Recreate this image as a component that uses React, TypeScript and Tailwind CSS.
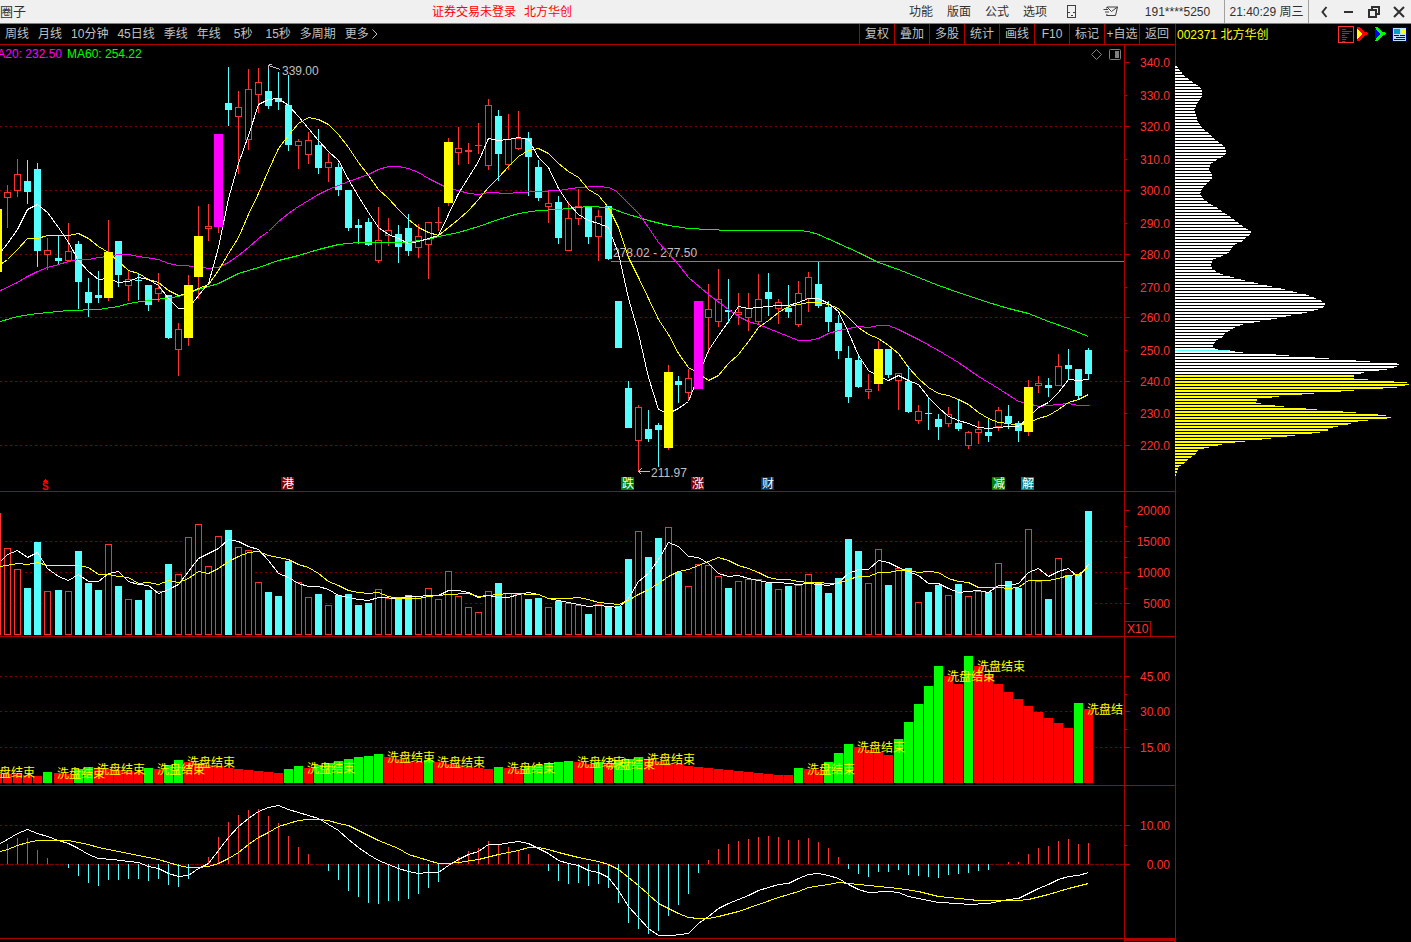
import { ReactNode } from "react"

type Kind = "r" | "c" | "y" | "m"
// kind, high, body top, body bottom, low, volume top
type Candle = [Kind, number, number, number, number, number]

const candles: Candle[] = [
    ["y", 209, 209, 272, 272, 513], ["r", 185, 192, 198, 228, 548], ["r", 159, 174, 191, 197, 569],
    ["c", 160, 181, 192, 204, 588], ["c", 163, 169, 251, 267, 542], ["r", 238, 250, 255, 270, 591],
    ["c", 235, 258, 261, 264, 590], ["r", 223, 251, 261, 261, 591], ["c", 241, 244, 282, 309, 551],
    ["c", 278, 292, 303, 317, 583], ["c", 271, 295, 298, 303, 590], ["y", 220, 252, 298, 301, 544],
    ["c", 241, 241, 275, 287, 586], ["r", 271, 279, 286, 301, 599], ["c", 273, 280, 281, 300, 600],
    ["c", 285, 285, 305, 311, 590], ["r", 273, 288, 294, 302, 591], ["c", 295, 295, 338, 339, 564],
    ["r", 323, 329, 350, 376, 574], ["y", 275, 285, 338, 346, 537], ["y", 206, 236, 277, 299, 524],
    ["r", 204, 226, 229, 241, 566], ["m", 134, 134, 227, 233, 536], ["c", 67, 103, 110, 126, 530],
    ["r", 91, 107, 117, 174, 547], ["r", 69, 89, 140, 150, 550], ["r", 68, 82, 95, 113, 582],
    ["c", 68, 91, 106, 109, 592], ["c", 72, 98, 102, 110, 596], ["c", 75, 105, 145, 151, 561],
    ["r", 139, 141, 146, 169, 582], ["r", 132, 140, 155, 164, 597], ["c", 129, 145, 168, 174, 594],
    ["r", 153, 162, 168, 182, 605], ["c", 163, 167, 190, 196, 595], ["c", 190, 190, 228, 231, 594],
    ["c", 219, 225, 228, 244, 605], ["c", 218, 222, 245, 246, 603], ["r", 207, 240, 261, 263, 589],
    ["r", 218, 230, 236, 246, 598], ["c", 225, 234, 247, 263, 597], ["c", 214, 228, 251, 256, 595],
    ["r", 224, 236, 248, 258, 596], ["r", 222, 222, 245, 279, 588], ["r", 207, 222, 223, 231, 599],
    ["y", 138, 142, 203, 206, 571], ["r", 127, 148, 153, 165, 596], ["r", 143, 150, 152, 164, 607],
    ["r", 123, 145, 146, 154, 612], ["r", 99, 105, 166, 170, 591], ["c", 110, 116, 154, 181, 583],
    ["r", 114, 139, 165, 170, 593], ["r", 111, 138, 149, 150, 594], ["c", 132, 138, 157, 196, 599],
    ["c", 160, 167, 198, 201, 598], ["r", 190, 203, 207, 223, 607], ["c", 196, 202, 238, 244, 601],
    ["r", 202, 218, 251, 251, 603], ["r", 189, 206, 219, 225, 605], ["c", 206, 206, 237, 244, 614],
    ["r", 210, 216, 237, 261, 604], ["c", 206, 206, 259, 260, 606], ["c", 301, 301, 348, 348, 606],
    ["c", 381, 388, 428, 428, 559], ["r", 405, 407, 441, 471, 531], ["c", 410, 429, 439, 442, 557],
    ["c", 423, 425, 430, 467, 538], ["y", 365, 372, 448, 450, 527], ["c", 376, 381, 385, 403, 572],
    ["r", 369, 378, 393, 400, 586], ["m", 301, 301, 389, 389, 564], ["r", 284, 309, 318, 353, 565],
    ["r", 269, 299, 322, 327, 576], ["c", 279, 310, 312, 323, 588], ["r", 293, 312, 315, 325, 581],
    ["r", 293, 308, 318, 331, 579], ["r", 274, 299, 322, 324, 579], ["c", 273, 292, 299, 316, 583],
    ["r", 299, 302, 309, 324, 589], ["c", 285, 308, 312, 318, 586], ["r", 281, 293, 325, 327, 585],
    ["r", 272, 277, 299, 312, 574], ["c", 262, 284, 306, 308, 583], ["c", 301, 307, 322, 332, 593],
    ["c", 315, 323, 351, 359, 578], ["c", 346, 358, 397, 403, 539], ["c", 356, 360, 387, 388, 551],
    ["r", 374, 389, 392, 399, 583], ["y", 341, 349, 384, 391, 549], ["c", 349, 349, 375, 378, 585],
    ["r", 373, 373, 381, 410, 568], ["c", 366, 381, 412, 413, 568], ["r", 405, 411, 421, 424, 602],
    ["c", 397, 413, 414, 430, 592], ["c", 414, 419, 427, 440, 585], ["r", 407, 414, 424, 427, 595],
    ["c", 400, 423, 429, 431, 584], ["r", 431, 432, 446, 449, 596], ["r", 421, 429, 433, 444, 591],
    ["c", 419, 432, 436, 442, 592], ["r", 407, 410, 427, 431, 563], ["c", 405, 416, 423, 429, 581],
    ["c", 421, 423, 431, 442, 588], ["y", 380, 387, 432, 436, 529], ["r", 376, 383, 386, 393, 581],
    ["c", 378, 385, 388, 397, 599], ["r", 354, 366, 386, 386, 558], ["c", 349, 365, 369, 379, 575],
    ["c", 369, 369, 396, 399, 574], ["c", 348, 350, 374, 380, 511],
]

const ma5 = "0,252 7,243 17,229 27,209 37,204 47,212 58,227 68,242 78,260 88,271 98,279 108,278 118,282 128,281 138,277 148,279 158,285 168,298 178,308 188,308 198,295 208,283 218,247 228,198 238,163 248,135 258,104 268,99 278,98 288,105 298,116 308,128 318,140 328,151 338,160 348,179 358,196 368,212 378,227 388,234 398,238 408,243 418,241 428,238 438,235 448,214 458,193 468,177 478,161 488,138 498,140 508,139 518,137 528,139 538,157 548,167 558,188 568,203 578,214 588,220 598,223 608,227 618,253 628,298 638,333 648,377 658,409 668,413 678,408 688,401 698,375 708,350 718,335 728,321 738,306 748,308 758,307 768,306 778,305 788,305 798,302 808,298 818,298 828,303 838,311 848,332 858,355 868,370 878,376 888,380 898,375 908,380 918,384 928,397 938,407 948,416 958,420 968,423 978,427 988,428 998,427 1008,426 1018,426 1028,417 1038,407 1048,402 1058,392 1068,379 1078,380 1088,379"
const ma10 = "0,264 7,259 17,249 27,238 37,238 47,235 68,235 78,233 88,238 98,246 108,252 118,261 128,270 138,273 148,279 158,282 168,290 178,295 188,293 198,288 208,284 218,270 228,253 238,237 248,214 258,193 268,170 278,148 288,135 298,123 308,117 318,119 328,124 338,134 348,147 358,162 368,175 378,189 388,198 398,209 408,219 418,227 428,232 438,235 448,227 458,219 468,210 478,199 488,187 498,177 508,166 518,156 528,150 538,148 548,153 558,163 568,171 578,177 588,189 598,195 608,207 618,227 628,257 638,277 648,298 658,319 668,334 678,353 688,367 698,373 708,380 718,375 728,363 738,354 748,341 758,327 768,320 778,312 788,306 798,304 808,302 818,302 828,304 838,308 848,317 858,327 868,334 878,338 888,345 898,353 908,367 918,378 928,387 938,393 948,395 958,399 968,404 978,412 988,418 998,422 1008,423 1018,425 1028,422 1038,418 1048,415 1058,409 1068,402 1078,399 1088,394"
const ma20 = "0,290 17,282 27,276 37,271 47,267 58,264 68,261 78,259 88,259 98,257 108,256 118,254 128,254 138,256 158,259 168,263 178,265 198,266 208,268 218,267 228,262 238,255 248,247 258,238 268,231 278,221 288,213 298,206 308,200 318,194 328,189 338,185 348,181 368,174 378,169 388,166 398,166 408,168 418,172 428,178 438,183 448,188 458,190 468,193 478,194 488,192 508,193 518,192 538,191 558,190 578,187 598,186 608,187 615,190 628,203 638,213 648,227 658,242 668,253 678,264 688,277 708,294 728,309 738,316 748,321 758,324 768,328 778,332 788,336 798,340 808,340 818,338 828,333 838,330 848,328 858,326 868,327 878,325 888,325 898,329 918,339 938,350 958,362 978,376 998,388 1018,401 1028,403 1038,406 1048,405 1068,403 1078,405 1088,405"
const ma60 = "0,321 17,316 37,313 68,310 98,309 118,306 128,303 148,300 178,296 198,289 208,286 218,283 238,273 258,267 278,260 298,255 318,249 338,244 358,242 408,242 418,240 428,239 438,236 458,232 478,226 498,219 518,213 538,210 558,209 588,206 608,207 628,214 648,220 668,225 688,228 728,230 798,230 808,231 818,234 838,243 858,252 878,262 898,269 918,277 938,285 958,292 988,302 1008,308 1028,313 1048,321 1068,328 1088,336"

const volMa5 = "0,561 7,554 17,550 27,557 37,552 47,568 58,576 68,580 78,574 88,581 98,581 108,573 118,571 128,581 138,584 148,585 158,593 168,589 178,584 188,571 198,558 208,553 218,548 228,539 238,541 248,546 258,549 268,560 278,573 288,577 298,583 308,586 318,586 328,589 338,595 348,597 358,599 368,600 378,597 398,598 408,596 438,595 448,590 458,590 468,592 478,597 488,595 498,597 508,597 518,594 528,592 538,594 548,598 558,600 568,602 578,604 588,606 598,605 608,606 618,607 628,598 638,581 648,573 658,559 668,542 678,546 688,556 698,557 708,563 718,573 728,576 738,575 748,578 768,582 778,582 798,584 808,583 828,585 838,582 848,573 858,569 868,569 878,560 888,562 898,567 908,571 918,575 928,583 938,583 948,588 958,592 968,591 978,590 988,592 998,585 1008,585 1018,583 1028,572 1038,568 1048,576 1058,571 1068,568 1078,577 1088,564"
const volMa10 = "0,566 17,563 27,564 37,562 47,565 78,565 88,567 98,574 108,574 118,576 128,577 138,583 148,582 158,584 168,580 178,582 188,578 198,571 208,573 218,568 228,561 238,556 248,552 258,551 268,555 278,557 288,559 298,564 308,567 318,573 328,581 338,585 348,590 358,592 368,593 378,592 388,596 398,598 418,598 428,596 448,594 468,593 478,596 488,595 508,593 538,594 548,598 568,598 578,597 588,599 598,602 618,604 628,600 638,594 648,589 658,583 668,576 678,571 688,569 698,565 708,561 718,557 728,560 738,565 748,568 758,572 768,577 778,579 788,579 798,581 808,582 838,583 848,579 858,576 868,576 878,572 888,572 898,570 908,570 918,572 928,571 938,572 948,578 958,581 968,582 978,587 998,587 1008,588 1018,587 1028,580 1048,580 1058,578 1068,575 1078,574 1088,567"

const dif = "0,843 7,839 17,833 27,829 37,833 47,836 58,840 68,843 78,848 88,854 98,858 112,859 128,861 138,862 148,866 158,868 168,873 178,876 188,875 198,868 208,863 218,850 228,837 238,826 248,818 258,811 268,807 278,805 288,809 308,815 318,818 328,824 338,830 348,839 358,847 368,854 378,860 388,864 398,868 408,871 418,873 428,872 438,872 448,865 458,859 468,854 478,851 488,844 498,844 518,841 528,843 538,848 548,853 558,860 568,863 578,865 588,870 598,872 608,877 618,890 628,906 638,917 648,928 658,935 672,935 688,933 698,923 708,916 718,908 728,903 738,899 748,895 758,890 768,887 778,884 788,883 798,878 808,874 818,873 828,875 838,878 848,884 858,889 868,892 888,891 898,892 908,896 918,898 928,900 938,902 958,903 968,904 988,903 998,901 1008,899 1018,898 1028,893 1038,888 1048,884 1058,879 1068,876 1078,875 1088,872"
const dea = "0,851 7,849 17,845 27,842 37,840 68,840 78,842 88,844 98,847 118,851 138,855 158,859 168,862 178,865 188,867 198,867 208,866 218,863 228,858 238,852 248,844 258,837 268,832 278,826 288,823 298,820 308,819 318,819 328,820 338,823 348,825 358,830 378,840 398,848 408,854 418,857 428,860 438,863 448,863 458,862 478,859 498,854 518,850 528,847 538,847 548,849 558,852 578,857 598,861 608,864 618,869 628,877 638,885 648,894 658,903 668,908 678,913 688,917 698,918 708,918 718,916 738,911 758,904 778,897 798,891 808,887 828,884 838,882 848,883 858,884 878,886 898,888 918,891 938,896 958,898 978,900 1018,900 1028,899 1048,894 1068,888 1088,883"

const washTops = [
    774, 774, 774, 775, 776, 772, 773, 774, 769, 767, 768, 769, 770, 771, 772, 768, 769, 765, 760, 762,
    763, 765, 766, 768, 769, 770, 771, 772, 773, 769, 766, 768, 765, 763, 761, 759, 757, 756, 754, 757,
    759, 761, 762, 760, 762, 764, 765, 767, 768, 769, 767, 768, 769, 766, 765, 763, 762, 761, 762, 764,
    762, 763, 761, 759, 757, 759, 761, 763, 764, 766, 767, 768, 769, 770, 771, 772, 773, 774, 775, 775,
    768, 769, 770, 762, 753, 744, 747, 750, 752, 755, 739, 722, 704, 686, 666, 676, 684, 656, 666, 675,
    684, 692, 699, 706, 712, 718, 723, 728, 703, 709,
]

const washLabels: [number, number][] = [
    [-13, 772], [57, 773], [97, 769], [157, 769], [187, 762], [307, 768], [387, 757], [437, 762], [507, 768],
    [577, 762], [607, 764], [647, 759], [807, 769], [857, 747], [947, 676], [977, 666], [1087, 709],
]

const macd = [
    864, 844, 838, 838, 850, 858, 864, 868, 876, 883, 886, 880, 880, 879, 879, 881, 879, 885, 887, 879,
    864, 857, 837, 822, 815, 810, 809, 816, 823, 836, 847, 854, 864, 871, 880, 891, 897, 903, 904, 901,
    901, 899, 894, 888, 882, 864, 857, 851, 848, 841, 845, 847, 850, 854, 864, 871, 881, 884, 883, 886,
    884, 888, 903, 923, 929, 934, 931, 916, 905, 894, 873, 860, 849, 844, 841, 839, 837, 836, 837, 840,
    840, 838, 842, 848, 857, 869, 874, 877, 872, 872, 870, 875, 876, 877, 878, 875, 874, 873, 871, 870,
    864, 862, 862, 854, 848, 846, 841, 839, 844, 843,
]

// y, width of the chip distribution
const chips: [number, number][] = [
    [65, 1], [69, 4], [75, 9], [82, 18], [85, 23], [88, 26], [91, 27], [95, 27], [98, 26], [103, 22], [109, 19],
    [115, 21], [122, 23], [128, 28], [133, 34], [140, 41], [144, 47], [147, 50], [153, 51], [156, 48], [159, 42],
    [163, 36], [169, 34], [175, 37], [178, 37], [181, 34], [186, 29], [190, 26], [194, 25], [198, 28], [203, 34],
    [207, 42], [211, 47], [217, 56], [222, 63], [228, 71], [231, 76], [235, 74], [238, 70], [241, 67], [244, 60],
    [248, 56], [252, 54], [256, 46], [259, 38], [263, 36], [268, 37], [272, 42], [275, 51], [279, 66], [282, 79],
    [285, 92], [288, 106], [291, 118], [294, 131], [297, 139], [300, 146], [303, 150], [307, 148], [309, 143],
    [312, 132], [315, 116], [318, 102], [321, 85], [324, 68], [327, 60], [332, 51], [337, 47], [340, 41],
    [347, 37], [349, 43], [352, 68], [354, 101], [357, 140], [360, 181], [363, 222], [365, 225], [369, 212],
    [372, 189], [375, 179], [378, 179], [379, 193], [382, 232], [384, 234], [387, 222], [390, 179], [393, 139],
    [396, 104], [399, 82], [402, 81], [404, 90], [407, 119], [410, 154], [413, 195], [416, 219], [418, 212],
    [421, 183], [425, 169], [428, 152], [431, 154], [434, 128], [437, 104], [440, 79], [443, 51], [446, 39],
    [449, 24], [454, 20], [459, 13], [463, 9], [466, 4], [470, 2], [476, 1],
]

const badges = [
    { x: 281, text: "港", fill: "#800000" },
    { x: 621, text: "跌", fill: "#008000" },
    { x: 691, text: "涨", fill: "#800000" },
    { x: 761, text: "财", fill: "#003366" },
    { x: 992, text: "减", fill: "#008000" },
    { x: 1021, text: "解", fill: "#008080" },
]

const periods = ["周线", "月线", "10分钟", "45日线", "季线", "年线", "5秒", "15秒", "多周期", "更多"]
const tools = ["复权", "叠加", "多股", "统计", "画线", "F10", "标记", "+自选", "返回"]
const menus = ["功能", "版面", "公式", "选项"]

const barX = (i: number) => (i < 6 ? i * 10 - 3 : i * 10 - 2)

// bars that rise above the previous one are green
const washFill = (i: number) => (i > 0 && washTops[i] < washTops[i - 1] ? "#00ff00" : "#ff0000")

function chipWidth(y: number){
    const next = chips.findIndex((c) => c[0] >= y)
    if(next <= 0) return chips[0][1]
    const [y0, w0] = chips[next - 1]
    const [y1, w1] = chips[next]
    return Math.round(w0 + ((w1 - w0) * (y - y0)) / (y1 - y0))
}

interface PanelProps{
    top: number
    height: string
    grid: number[]
    ticks: [number, string][]
    minor: number[]
    children: ReactNode
    axisExtra?: ReactNode
}

function Panel({ top, height, grid, ticks, minor, children, axisExtra }: PanelProps){
    return(
        <div className={`flex border-b border-[#b00000] ${height}`}>
            <svg className="h-full min-w-0 flex-1" shapeRendering="crispEdges">
                <g transform={`translate(0 ${-top})`}>
                    {grid.map((y) => (
                        <line key={y} x1="0" x2="100%" y1={y + 0.5} y2={y + 0.5} stroke="#800000" strokeDasharray="2 3" />
                    ))}
                    {children}
                </g>
            </svg>
            <svg className="h-full w-[51px] shrink-0 border-l border-[#b00000]" shapeRendering="crispEdges">
                <g transform={`translate(0 ${-top})`}>
                    {minor.map((y) => (
                        <rect key={y} x="0" y={y} width="2" height="1" fill="#b00000" />
                    ))}
                    {ticks.map(([y, label]) => (
                        <g key={y}>
                            {!minor.includes(y) && <rect x="0" y={y} width="5" height="1" fill="#b00000" />}
                            <text x="45" y={y + 5} textAnchor="end" fill="#ff3232">{label}</text>
                        </g>
                    ))}
                    {axisExtra}
                </g>
            </svg>
        </div>
    )
}

function Line({ points, color }: { points: string, color: string }){
    return <polyline points={points} transform="translate(0.5 0.5)" fill="none" stroke={color} />
}

function CandleBar({ candle, x }: { candle: Candle, x: number }){
    const [kind, high, top, bottom, low] = candle
    const color = kind === "c" ? "#54ffff" : "#ff3232"

    return(
        <g>
            <rect x={x} y={high} width="1" height={Math.max(low - high, 0)} fill={color} />
            {kind === "c" && <rect x={x - 3} y={top} width="7" height={bottom - top} fill={color} />}
            {kind === "r" && bottom - top < 3 && <rect x={x - 3} y={top} width="7" height={bottom - top} fill={color} />}
            {kind === "r" && bottom - top >= 3 && (
                <rect x={x - 2.5} y={top + 0.5} width="6" height={bottom - top - 1} fill="#000" stroke={color} />
            )}
        </g>
    )
}

function PricePanel(){
    const prices: [number, string][] = [
        [62, "340.0"], [95, "330.0"], [126, "320.0"], [159, "310.0"], [190, "300.0"], [223, "290.0"], [254, "280.0"],
        [287, "270.0"], [317, "260.0"], [350, "250.0"], [381, "240.0"], [413, "230.0"], [445, "220.0"],
    ]

    return(
        <Panel
            top={45}
            height="h-[447px]"
            grid={[126, 190, 254, 317, 381, 445]}
            ticks={prices}
            minor={[95, 159, 223, 287, 350, 413]}
        >
            <rect x="611" y="261" width="100%" height="1" fill="#808080" />
            {candles.map((c, i) => <CandleBar key={i} candle={c} x={barX(i)} />)}
            <text x="613" y="257" fill="#c0c0c0">278.02 - 277.50</text>
            <Line points={ma60} color="#00ff00" />
            <Line points={ma20} color="#ff00ff" />
            <Line points={ma10} color="#ffff00" />
            <Line points={ma5} color="#ffffff" />
            {candles.map(([kind, , top, bottom], i) => (kind === "y" || kind === "m") && (
                <rect
                    key={i}
                    x={barX(i) - 4}
                    y={top}
                    width="9"
                    height={bottom - top}
                    fill={kind === "y" ? "#ffff00" : "#ff00ff"}
                />
            ))}
            <text x="62" y="58" textAnchor="end" fill="#ff00ff">MA20: 232.50</text>
            <text x="67" y="58" fill="#00ff00">MA60: 254.22</text>
            <path d="M280.500 69.500L268.500 65.500M268.500 69V65.500M268.500 64.500H272" fill="none" stroke="#c0c0c0" />
            <text x="282" y="75" fill="#c0c0c0">339.00</text>
            <path d="M650 471.500H638.500M641.500 468.500L638.500 471.500L641.500 474.500" fill="none" stroke="#c0c0c0" />
            <text x="651" y="477" fill="#c0c0c0">211.97</text>
            <g fill="none" stroke="#808080" shapeRendering="auto">
                <path d="M1096.500 49.500L1101.500 54.500L1096.500 59.500L1091.500 54.500Z" />
                <rect x="1109.500" y="49.500" width="11" height="10" rx="1" />
                <rect x="1115" y="51" width="4" height="7" fill="#808080" stroke="none" />
            </g>
            <path d="M45.500 479L48 482H43Z" fill="#ff0000" />
            <text x="42" y="490" fill="#ff0000" fontSize="10" fontWeight="700">S</text>
            {badges.map((b) => (
                <g key={b.x}>
                    <rect x={b.x} y="477" width="13" height="13" fill={b.fill} />
                    <text x={b.x + 1} y="488" fill="#fff">{b.text}</text>
                </g>
            ))}
        </Panel>
    )
}

function VolumePanel(){
    return(
        <Panel
            top={492}
            height="h-[145px]"
            grid={[541, 572, 603]}
            ticks={[[510, "20000"], [541, "15000"], [572, "10000"], [603, "5000"]]}
            minor={[526, 557, 588]}
            axisExtra={
                <>
                    <path d="M0 621.500H25.500V636" fill="none" stroke="#b00000" />
                    <text x="2" y="633" fill="#ff3232">X10</text>
                </>
            }
        >
            {candles.map(([kind, , , , , top], i) => kind === "c" ? (
                <rect key={i} x={barX(i) - 3} y={top} width="7" height={635 - top} fill="#54ffff" />
            ) : (
                <rect
                    key={i}
                    x={barX(i) - 2.5}
                    y={top + 0.5}
                    width="6"
                    height={634 - top}
                    fill="#000"
                    stroke="#ff3232"
                />
            ))}
            <Line points={volMa5} color="#ffffff" />
            <Line points={volMa10} color="#ffff00" />
        </Panel>
    )
}

function WashPanel(){
    return(
        <Panel
            top={637}
            height="h-[149px]"
            grid={[676, 711, 747]}
            ticks={[[676, "45.00"], [711, "30.00"], [747, "15.00"]]}
            minor={[694, 729]}
        >
            {washTops.map((top, i) => (
                <rect key={i} x={barX(i) - 4} y={top} width="9" height={783 - top} fill={washFill(i)} />
            ))}
            {washLabels.map(([x, y]) => (
                <text key={x} x={x} y={y + 5} fill="#ffff00">洗盘结束</text>
            ))}
        </Panel>
    )
}

function MacdPanel(){
    return(
        <Panel
            top={786}
            height="h-[153px]"
            grid={[825]}
            ticks={[[825, "10.00"], [864, "0.00"]]}
            minor={[845]}
        >
            <line x1="0" x2="100%" y1="864.5" y2="864.5" stroke="#800000" strokeDasharray="4 1" />
            {macd.map((y, i) => y !== 864 && (
                <rect
                    key={i}
                    x={barX(i)}
                    y={Math.min(y, 864)}
                    width="1"
                    height={Math.abs(y - 864)}
                    fill={y > 864 ? "#54ffff" : "#ff3232"}
                />
            ))}
            <Line points={dif} color="#ffffff" />
            <Line points={dea} color="#ffff00" />
        </Panel>
    )
}

function TitleBar(){
    return(
        <header className="flex h-6 items-center border-b border-[#808080] bg-[#f0f0f0] text-[#303030]">
            <div className="w-[432px] shrink-0 text-[13px]">圈子</div>
            <div className="flex gap-2 whitespace-nowrap text-[#ff0000]">
                <span>证券交易未登录</span>
                <span>北方华创</span>
            </div>
            <div className="ml-auto flex h-full items-center whitespace-nowrap">
                {menus.map((m) => (
                    <button key={m} className="w-[38px]">{m}</button>
                ))}
                <button className="flex w-[35px] justify-center" aria-label="手机">
                    <svg width="9" height="13" fill="none" stroke="#404040" shapeRendering="crispEdges">
                        <rect x="0.5" y="0.5" width="8" height="12" />
                        <path d="M1 7.500H3M6 7.500H8M4 10.500H6" />
                    </svg>
                </button>
                <button className="flex w-[42px] justify-center" aria-label="消息">
                    <svg width="15" height="11" fill="none" stroke="#404040">
                        <path d="M3.500 2.500L4 1H14.500L12.500 9.500H3.500L4 8M4 1L8.500 5.500L14.500 1M0.500 3.500H5M2 6H6" />
                    </svg>
                </button>
                <div className="w-[93px] text-center">191****5250</div>
                <div className="mr-0.5 flex h-full w-[85px] items-center justify-center border-x border-[#a0a0a0]">
                    21:40:29 周三
                </div>
                <button className="flex w-[25px] justify-center" aria-label="收起">
                    <svg width="8" height="12" fill="none" stroke="#303030" strokeWidth="2">
                        <path d="M6.500 1L2.500 6L6.500 11" />
                    </svg>
                </button>
                <button className="flex w-[25px] justify-center" aria-label="最小化">
                    <svg width="10" height="12"><rect x="0" y="5" width="9" height="2" fill="#303030" /></svg>
                </button>
                <button className="flex w-[25px] justify-center" aria-label="还原">
                    <svg width="12" height="12" fill="none" stroke="#303030" strokeWidth="2">
                        <path d="M1 4H8V11H1ZM4 4V1H11V8H8" />
                    </svg>
                </button>
                <button className="flex w-[25px] justify-center" aria-label="关闭">
                    <svg width="12" height="12" fill="none" stroke="#303030" strokeWidth="2">
                        <path d="M1 1L11 11M11 1L1 11" />
                    </svg>
                </button>
            </div>
        </header>
    )
}

function Toolbar(){
    return(
        <nav className="flex h-[21px] items-stretch border-b border-[#b00000] whitespace-nowrap text-[#c0c0c0]">
            <div className="flex items-center gap-[9px] pl-[5px]">
                {periods.map((p) => (
                    <button key={p} className={p.endsWith("秒") ? "pl-1" : ""}>{p}</button>
                ))}
                <svg className="-ml-1.5" width="6" height="10" fill="none" stroke="#c0c0c0">
                    <path d="M0.500 0.500L5 5L0.500 9.500" />
                </svg>
            </div>
            <div className="ml-auto flex">
                {tools.map((t) => (
                    <button key={t} className="w-[35px] border-l border-[#b00000]">{t}</button>
                ))}
                <span className="w-px" />
            </div>
        </nav>
    )
}

function ChipPanel(){
    const rows: number[] = []
    for(let y = 65; y <= 476; y++){
        if((y - 89) % 3 !== 0) rows.push(y)
    }

    return(
        <aside className="flex w-[236px] shrink-0 flex-col border-l border-[#b00000]">
            <div className="flex h-[21px] items-center pr-[3px] pl-px text-[#ffff00]">
                <span className="whitespace-nowrap">002371 北方华创</span>
                <svg className="ml-auto" width="70" height="18" shapeRendering="crispEdges">
                    <rect x="0.5" y="0.5" width="15" height="16" fill="none" stroke="#ff3232" />
                    <path d="M4 3.500H8M4 5.500H14M4 7.500H11M4 9.500H7" stroke="#008000" />
                    <path d="M4 11.500H9M4 13.500H8M4 15.500H7" stroke="#ff0000" />
                    <path d="M19 1H22L25 5L30 7V8L25 11L22 15H19Z" fill="#ff0000" />
                    <path d="M19 3L24 8L19 13Z" fill="#ffff00" />
                    <path d="M37 1H40L43 5L48 7V8L43 11L40 15H37L41 8Z" fill="#00ff00" />
                    <path d="M37 3L42 8L37 13Z" fill="#0000ff" />
                    <rect x="54.500" y="1.500" width="14" height="14" fill="#c0e0ff" stroke="#000080" />
                    <rect x="56" y="3" width="6" height="5" fill="#00a0c0" />
                    <rect x="63" y="3" width="5" height="5" fill="#ffff00" />
                    <path d="M56 9.500H61M62 9.500H67M58 11.500H67M56 13.500H67" stroke="#0000a0" />
                </svg>
            </div>
            {/* bars start on the border line itself */}
            <svg className="-ml-px h-[440px] w-[236px]" shapeRendering="crispEdges">
                <g transform="translate(0 -45)">
                    {rows.map((y) => (
                        <rect key={y} x="0" y={y} width={chipWidth(y)} height="1" fill={y < 375 ? "#fff" : "#ffff00"} />
                    ))}
                    <rect x="0" y="350" width="55" height="1" fill="#54ffff" />
                </g>
            </svg>
        </aside>
    )
}

export default function App(){
    return(
        <div className="flex min-h-screen flex-col overflow-hidden bg-black font-['Liberation_Sans','Noto_Sans_CJK_SC',sans-serif] text-[12px] leading-4">
            <TitleBar />
            <div className="flex flex-1">
                <main className="flex min-w-0 flex-1 flex-col">
                    <Toolbar />
                    <PricePanel />
                    <VolumePanel />
                    <WashPanel />
                    <MacdPanel />
                    <div className="ml-auto w-[51px] flex-1 border-x border-t-2 border-[#b00000]" />
                </main>
                <ChipPanel />
            </div>
        </div>
    )
}
